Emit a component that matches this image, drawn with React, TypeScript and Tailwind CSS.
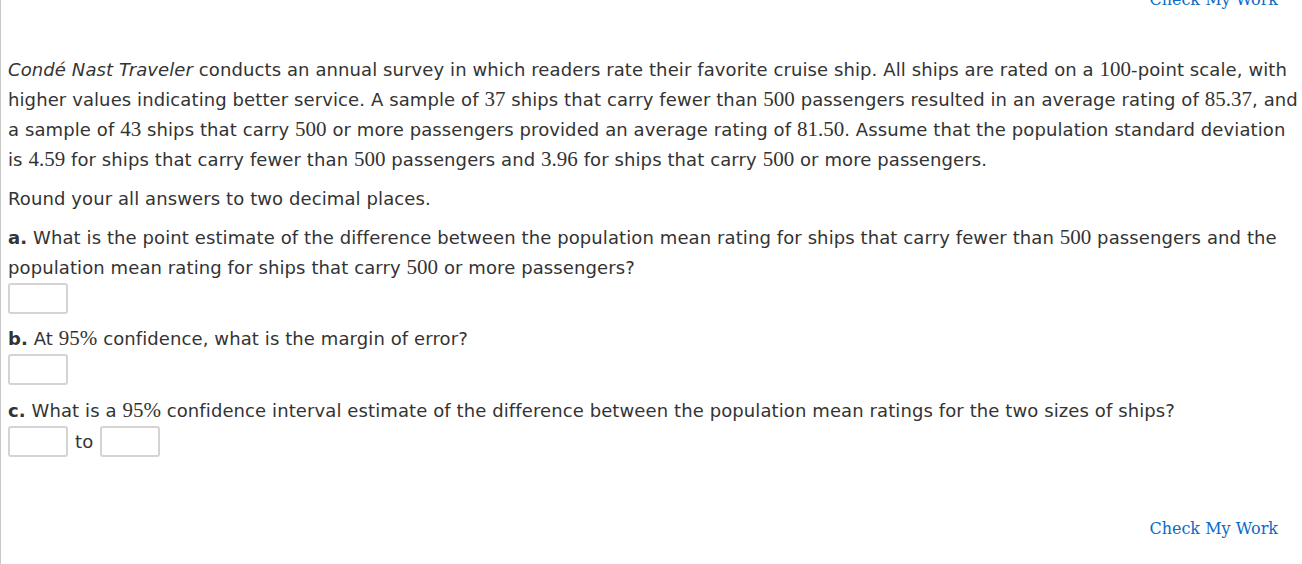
const M = ({ children }: { children: React.ReactNode }) => (
  <span className="font-['Liberation_Serif','Times_New_Roman',serif] text-[21px] leading-none tracking-normal">{children}</span>
)

function Box() {
  return <div className="w-[60px] h-[31px] rounded-[3px] border-2 border-[#d4d4d4] bg-white" />
}

export default function App() {
  return (
    <div className="w-[1302px] h-[564px] overflow-hidden bg-white border-l border-[#c8c8c8] font-['DejaVu_Sans','Verdana',sans-serif] text-[18px] tracking-[0.1px] text-[#333] leading-[30px]">
      <div className="flex justify-end pr-[24px] -mt-[14px] h-[28px]">
        <a className="font-['DejaVu_Serif','Georgia',serif] text-[16px] tracking-normal text-[#0a6ac4] leading-[28px]">Check My Work</a>
      </div>
      <div className="pl-[7px] pr-[2px] pt-[41px]">
        <p>
          <i>Condé Nast Traveler</i> conducts an annual survey in which readers rate their favorite cruise ship. All ships are rated on a <M>100</M>-point scale, with higher values indicating better service. A sample of <M>37</M> ships that carry fewer than <M>500</M> passengers resulted in an average rating of <M>85.37</M>, and a sample of <M>43</M> ships that carry <M>500</M> or more passengers provided an average rating of <M>81.50</M>. Assume that the population standard deviation is <M>4.59</M> for ships that carry fewer than <M>500</M> passengers and <M>3.96</M> for ships that carry <M>500</M> or more passengers.
        </p>
        <p className="mt-[9px]">Round your all answers to two decimal places.</p>
        <p className="mt-[9px]">
          <b>a.</b> What is the point estimate of the difference between the population mean rating for ships that carry fewer than <M>500</M> passengers and the population mean rating for ships that carry <M>500</M> or more passengers?
        </p>
        <Box />
        <p className="mt-[10px]">
          <b>b.</b> At <M>95%</M> confidence, what is the margin of error?
        </p>
        <Box />
        <p className="mt-[11px]">
          <b>c.</b> What is a <M>95%</M> confidence interval estimate of the difference between the population mean ratings for the two sizes of ships?
        </p>
        <div className="flex items-center gap-[6px]">
          <Box />
          <span className="px-[1px]">to</span>
          <Box />
        </div>
      </div>
      <div className="flex justify-end pr-[24px] mt-[58px]">
        <a className="font-['DejaVu_Serif','Georgia',serif] text-[16px] tracking-normal text-[#0a6ac4] leading-[28px]">Check My Work</a>
      </div>
    </div>
  )
}
